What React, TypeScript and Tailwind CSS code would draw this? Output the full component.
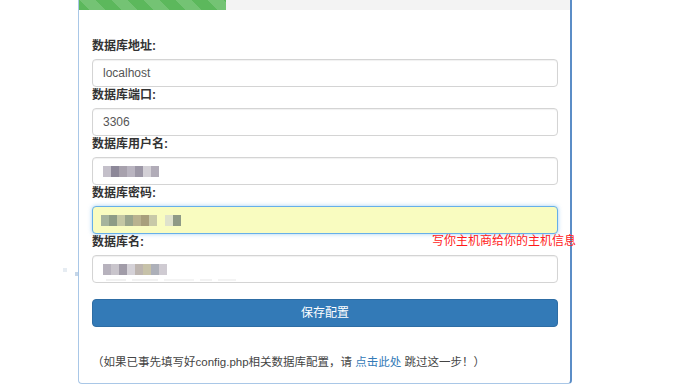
import React from 'react';

const font = { fontFamily: '"Liberation Sans", "Noto Sans CJK SC", sans-serif' };

// pixelated (censored) input values
const userMosaic = ['#c4c0ca', '#8d8899', '#a7a1ad', '#b9b4c0', '#9c97a6', '#d3d0d6', '#b1acb8'];
const passMosaic = ['#a6b49d', '#8e9c86', '#c4c7a4', '#9aa58c', '#b9b28f', '#a89f7c', '#c8c9a8', '', '#dfe2cc', '#8f9a86'];
const dbMosaic = ['#b7b2bd', '#c9c5cc', '#a19ca8', '#d5d2d8', '#bdb5b0', '#c7c2a9', '#adb0b9', '#cfcbd2'];

const Mosaic = ({ colors }: { colors: string[] }) => (
  <div className="flex items-center blur-[0.7px]">
    {colors.map((c, i) => (
      <span key={i} className="inline-block w-[8px] h-[11px]" style={{ backgroundColor: c || 'transparent' }} />
    ))}
  </div>
);

interface FieldProps {
  label: string;
  value?: string;
  mosaic?: string[];
  focused?: boolean;
}

const Field = ({ label, value, mosaic, focused }: FieldProps) => (
  <div>
    <label className="block text-[12px] leading-[17px] font-bold text-[#333] mb-[4px]">{label}</label>
    <div
      className={
        focused
          ? 'h-[28px] rounded-[4px] border border-[#66afe9] bg-[#f9fcc0] shadow-[0_0_4px_rgba(102,175,233,0.6)] flex items-center px-[8px]'
          : 'h-[28px] rounded-[4px] border border-[#d4d4d4] bg-white shadow-[inset_0_1px_1px_rgba(0,0,0,0.06)] flex items-center px-[10px]'
      }
    >
      {value && <span className="text-[12px] text-[#555]">{value}</span>}
      {mosaic && <Mosaic colors={mosaic} />}
    </div>
  </div>
);

export default function App() {
  return (
    <div className="relative w-[700px] h-[384px] bg-white overflow-hidden" style={font}>
      <div className="ml-[78px] w-[494px] h-[384px] border-l border-l-[#a9c7e7] border-r-2 border-r-[#5b8dc7] border-b border-b-[#a9c7e7] rounded-b-[4px]">
        {/* progress */}
        <div className="h-[10px] bg-[#f3f3f3]">
          <div className="h-full w-[30%] bg-[#5cb85c] bg-[linear-gradient(45deg,rgba(255,255,255,.15)_25%,transparent_25%,transparent_50%,rgba(255,255,255,.15)_50%,rgba(255,255,255,.15)_75%,transparent_75%,transparent)] bg-[length:32px_32px]" />
        </div>

        <div className="pt-[28px] pl-[13px] pr-[12px]">
          <Field label="数据库地址:" value="localhost" />
          <Field label="数据库端口:" value="3306" />
          <Field label="数据库用户名:" mosaic={userMosaic} />
          <Field label="数据库密码:" mosaic={passMosaic} focused />
          <Field label="数据库名:" mosaic={dbMosaic} />

          <button className="mt-[16px] w-full h-[28px] rounded-[4px] bg-[#337ab7] border border-[#2e6da4] text-white text-[12px]">
            保存配置
          </button>

          <p className="mt-[26px] text-[11.5px] leading-[18px] text-[#444]">
            （如果已事先填写好config.php相关数据库配置，请 <a className="text-[#337ab7]">点击此处</a> 跳过这一步！）
          </p>
        </div>
      </div>

      {/* hint */}
      <div className="absolute left-[432px] top-[233px] text-[12px] leading-[16px] text-[#ff1a1a]">
        写你主机商给你的主机信息
      </div>

      {/* autocomplete remnant */}
      <div className="absolute left-[63px] top-[268px] w-[4px] h-[4px] bg-[#e6ecf2]" />
      <div className="absolute left-[75px] top-[272px] w-[3px] h-[4px] bg-[#c5d6e8]" />
      <div className="absolute left-[106px] top-[279px] flex gap-[6px] opacity-25 blur-[0.6px]">
        <span className="w-[20px] h-[2px] bg-[#c9c9c9]" />
        <span className="w-[26px] h-[2px] bg-[#cfcfcf]" />
        <span className="w-[30px] h-[2px] bg-[#d6d6d6]" />
        <span className="w-[12px] h-[2px] bg-[#cfcfcf]" />
        <span className="w-[18px] h-[2px] bg-[#d3d3d3]" />
      </div>
    </div>
  );
}
